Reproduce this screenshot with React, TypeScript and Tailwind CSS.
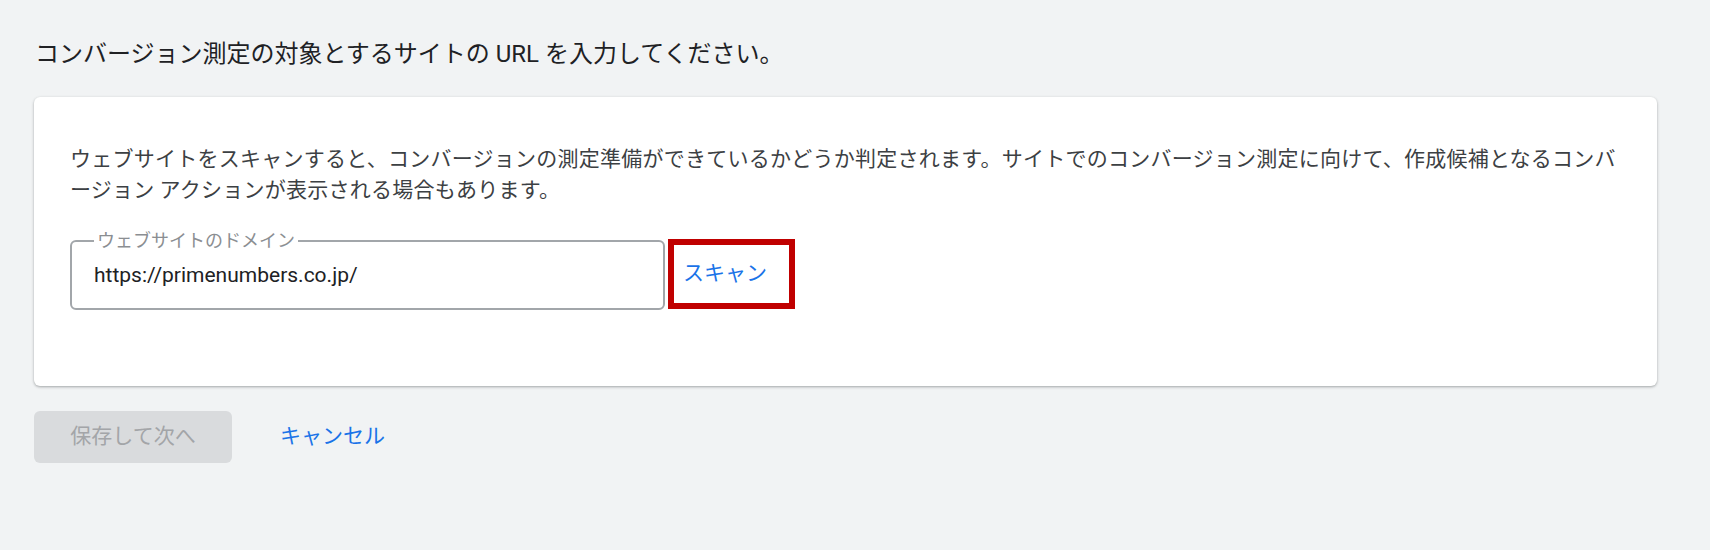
import React from 'react'

const FONT = { fontFamily: 'Roboto, "Noto Sans CJK JP", sans-serif' }

function DomainField({ value }: { value: string }) {
  return (
    <fieldset className="w-[595px] h-[81px] -mt-[12px] border-2 border-[#a2a6aa] rounded-[6px] pl-[22px] pr-4 flex items-center">
      <legend className="px-[3px] text-[18px] leading-[24px] text-[#8b8e92]">ウェブサイトのドメイン</legend>
      <span className="text-[21px] text-[#202124] -mt-[10px]">{value}</span>
    </fieldset>
  )
}

export default function App() {
  return (
    <div className="min-h-[550px] bg-[#f1f3f4] pl-[34px] pt-[38px]" style={FONT}>
      <h1 className="text-[24px] leading-[32px] text-[#202124] pl-[1px]">
        コンバージョン測定の対象とするサイトの URL を入力してください。
      </h1>

      <div className="mt-[27px] w-[1623px] h-[289px] bg-white rounded-[6px] shadow-[0_1px_3px_rgba(60,64,67,0.3),0_1px_2px_rgba(60,64,67,0.15)] pl-[36px] pr-[30px] pt-[45px]">
        <p className="text-[21px] leading-[31px] tracking-[0.25px] text-[#3c4043] [line-break:loose] font-['Noto_Sans_CJK_JP',sans-serif]">
          ウェブサイトをスキャンすると、コンバージョンの測定準備ができているかどうか判定されます。サイトでのコンバージョン測定に向けて、作成候補となるコンバージョン アクションが表示される場合もあります。
        </p>

        <div className="mt-[35px] flex items-end gap-[3px]">
          <DomainField value="https://primenumbers.co.jp/" />
          <button className="w-[127px] h-[70px] border-[6px] border-[#c00000] pl-[9px] text-left text-[21px] text-[#1a73e8] mb-[1px]">
            スキャン
          </button>
        </div>
      </div>

      <div className="mt-[25px] flex items-center gap-[48px]">
        <button className="w-[198px] h-[52px] rounded-[6px] bg-[#d9dbdd] text-[21px] text-[#a3a5a8]" disabled>
          保存して次へ
        </button>
        <button className="text-[21px] text-[#1a73e8]">キャンセル</button>
      </div>
    </div>
  )
}
